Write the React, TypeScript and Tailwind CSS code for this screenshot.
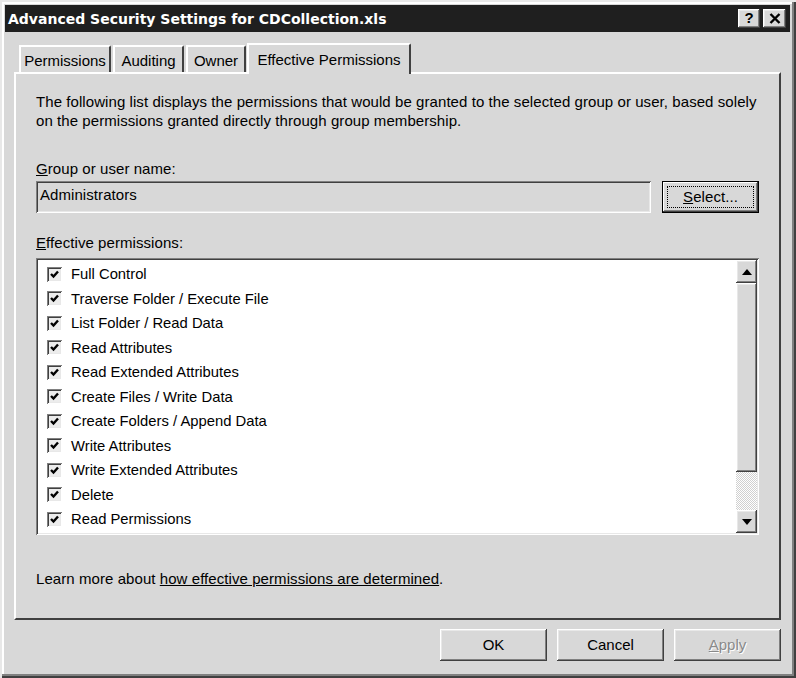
import React from "react";

const raised =
  "shadow-[inset_-1px_-1px_0_#404040,inset_1px_1px_0_#ffffff,inset_-2px_-2px_0_#808080,inset_2px_2px_0_#e8e8e8]";
const sunken =
  "shadow-[inset_1px_1px_0_#808080,inset_-1px_-1px_0_#ffffff,inset_2px_2px_0_#404040,inset_-2px_-2px_0_#e8e8e8]";

const perms = [
  "Full Control",
  "Traverse Folder / Execute File",
  "List Folder / Read Data",
  "Read Attributes",
  "Read Extended Attributes",
  "Create Files / Write Data",
  "Create Folders / Append Data",
  "Write Attributes",
  "Write Extended Attributes",
  "Delete",
  "Read Permissions",
];

function Check() {
  return (
    <div
      className={`w-[15px] h-[15px] bg-[#ececec] flex items-center justify-center ${sunken}`}
    >
      <svg width="11" height="11" viewBox="0 0 11 11">
        <path d="M2 5 L4.5 7.5 L9 2.5" stroke="#000" strokeWidth="2.4" fill="none" />
      </svg>
    </div>
  );
}

function Tab({ label, selected, w }: { label: string; selected?: boolean; w: string }) {
  if (selected) {
    return (
      <div className={`relative ${w} h-[31px] -mb-[2px] pt-[4px] text-center bg-[#d8d8d8] border-t-2 border-l-2 border-white border-r-2 border-r-[#404040] rounded-tr-[2px] z-10 text-[15px] text-black`}>
        {label}
      </div>
    );
  }
  return (
    <div className={`${w} h-[27px] pt-[5px] text-center bg-[#d8d8d8] border-t-2 border-l-2 border-white border-r-2 border-r-[#404040] rounded-tr-[2px] text-[15px] leading-[18px] text-black`}>
      {label}
    </div>
  );
}

function Button({
  children,
  disabled,
  w,
}: {
  children: React.ReactNode;
  disabled?: boolean;
  w: string;
}) {
  return (
    <div
      className={`${w} h-[32px] flex items-center justify-center bg-[#d8d8d8] ${raised} text-[15px] ${
        disabled ? "text-[#8a8a8a] [text-shadow:1px_1px_0_#ffffff]" : "text-black"
      }`}
    >
      {children}
    </div>
  );
}

export default function App() {
  return (
    <div
      className="w-[796px] h-[678px] bg-[#d8d8d8] flex flex-col shadow-[inset_2px_2px_0_#e8e8e8,inset_-2px_-2px_0_#404040,inset_-4px_-4px_0_#808080,inset_4px_4px_0_#ffffff] p-[5px] pr-[6px] overflow-hidden"
      style={{ fontFamily: '"Liberation Sans", Arial, sans-serif' }}
    >
      {/* Title bar */}
      <div className="h-[27px] bg-[#1f1f1f] flex items-center pl-[3px] pr-[4px]">
        <div
          className="text-white font-bold text-[14px] flex-1 pt-[1px]"
          style={{ fontFamily: '"DejaVu Sans", Verdana, sans-serif' }}
        >
          Advanced Security Settings for CDCollection.xls
        </div>
        <div className="flex gap-[3px]">
          <div className={`w-[22px] h-[19px] bg-[#d8d8d8] ${raised} flex items-center justify-center font-bold text-[15px] text-black`}>
            ?
          </div>
          <div className={`w-[23px] h-[19px] bg-[#d8d8d8] ${raised} flex items-center justify-center`}>
            <svg width="12" height="11" viewBox="0 0 12 11">
              <path d="M1.5 1 L10.5 10 M10.5 1 L1.5 10" stroke="#000" strokeWidth="2.4" />
            </svg>
          </div>
        </div>
      </div>

      {/* Tabs */}
      <div className="flex items-end pl-[14px] mt-[11px] h-[29px]">
        <Tab label="Permissions" w="w-[92px]" />
        <div className="w-[2px]" />
        <Tab label="Auditing" w="w-[71px]" />
        <div className="w-[2px]" />
        <Tab label="Owner" w="w-[60px]" />
        <div className="w-[1px]" />
        <Tab label="Effective Permissions" selected w="w-[164px]" />
      </div>

      {/* Panel */}
      <div className="ml-[9px] mr-[9px] h-[548px] border-t-2 border-l-2 border-white border-r-2 border-r-[#404040] border-b-2 border-b-[#404040] flex flex-col px-[20px] text-[15px] tracking-[0.07px] text-black">
        <div className="mt-[18px] leading-[19px]">
          The following list displays the permissions that would be granted to the selected group or user, based solely
          <br />
          on the permissions granted directly through group membership.
        </div>

        <div className="mt-[29px] leading-[19px]">
          <span className="underline">G</span>roup or user name:
        </div>
        <div className="mt-[3px] flex items-center gap-[11px]">
          <div className={`flex-1 h-[32px] bg-[#d8d8d8] ${sunken} flex items-center pl-[4px] pb-[3px]`}>
            Administrators
          </div>
          <div className="w-[97px] h-[32px] border border-black bg-[#d8d8d8] shadow-[inset_-1px_-1px_0_#404040,inset_1px_1px_0_#ffffff,inset_-2px_-2px_0_#808080] p-[4px]">
            <div className="w-full h-full border border-dotted border-black flex items-center justify-center">
              <span>
                <span className="underline">S</span>elect...
              </span>
            </div>
          </div>
        </div>

        <div className="mt-[20px] leading-[19px]">
          <span className="underline">E</span>ffective permissions:
        </div>
        <div className={`mt-[6px] h-[277px] bg-white ${sunken} p-[2px] flex`}>
          <div className="flex-1 flex flex-col pt-[2px] text-[14.8px] tracking-normal">
            {perms.map((p) => (
              <div key={p} className="h-[24.5px] flex items-center pl-[9px] gap-[9px]">
                <Check />
                <span>{p}</span>
              </div>
            ))}
          </div>
          <div className="w-[21px] flex flex-col">
            <div className={`h-[23px] bg-[#d8d8d8] ${raised} flex items-center justify-center`}>
              <svg width="10" height="6" viewBox="0 0 10 6">
                <path d="M0 6 L5 0 L10 6 Z" fill="#000" />
              </svg>
            </div>
            <div className={`h-[189px] bg-[#d8d8d8] ${raised}`} />
            <div className="flex-1 bg-[repeating-conic-gradient(#ffffff_0_25%,#d0d0d0_0_50%)] bg-[length:2px_2px]" />
            <div className={`h-[23px] bg-[#d8d8d8] ${raised} flex items-center justify-center`}>
              <svg width="10" height="6" viewBox="0 0 10 6">
                <path d="M0 0 L10 0 L5 6 Z" fill="#000" />
              </svg>
            </div>
          </div>
        </div>

        <div className="mt-[34px] leading-[19px]">
          Learn more about <span className="underline">how effective permissions are determined</span>.
        </div>
      </div>

      {/* Bottom buttons */}
      <div className="flex justify-end gap-[10px] mt-[9px] mr-[9px]">
        <Button w="w-[107px]">OK</Button>
        <Button w="w-[107px]">Cancel</Button>
        <Button w="w-[107px]" disabled>
          <span>
            <span className="underline">A</span>pply
          </span>
        </Button>
      </div>
    </div>
  );
}
